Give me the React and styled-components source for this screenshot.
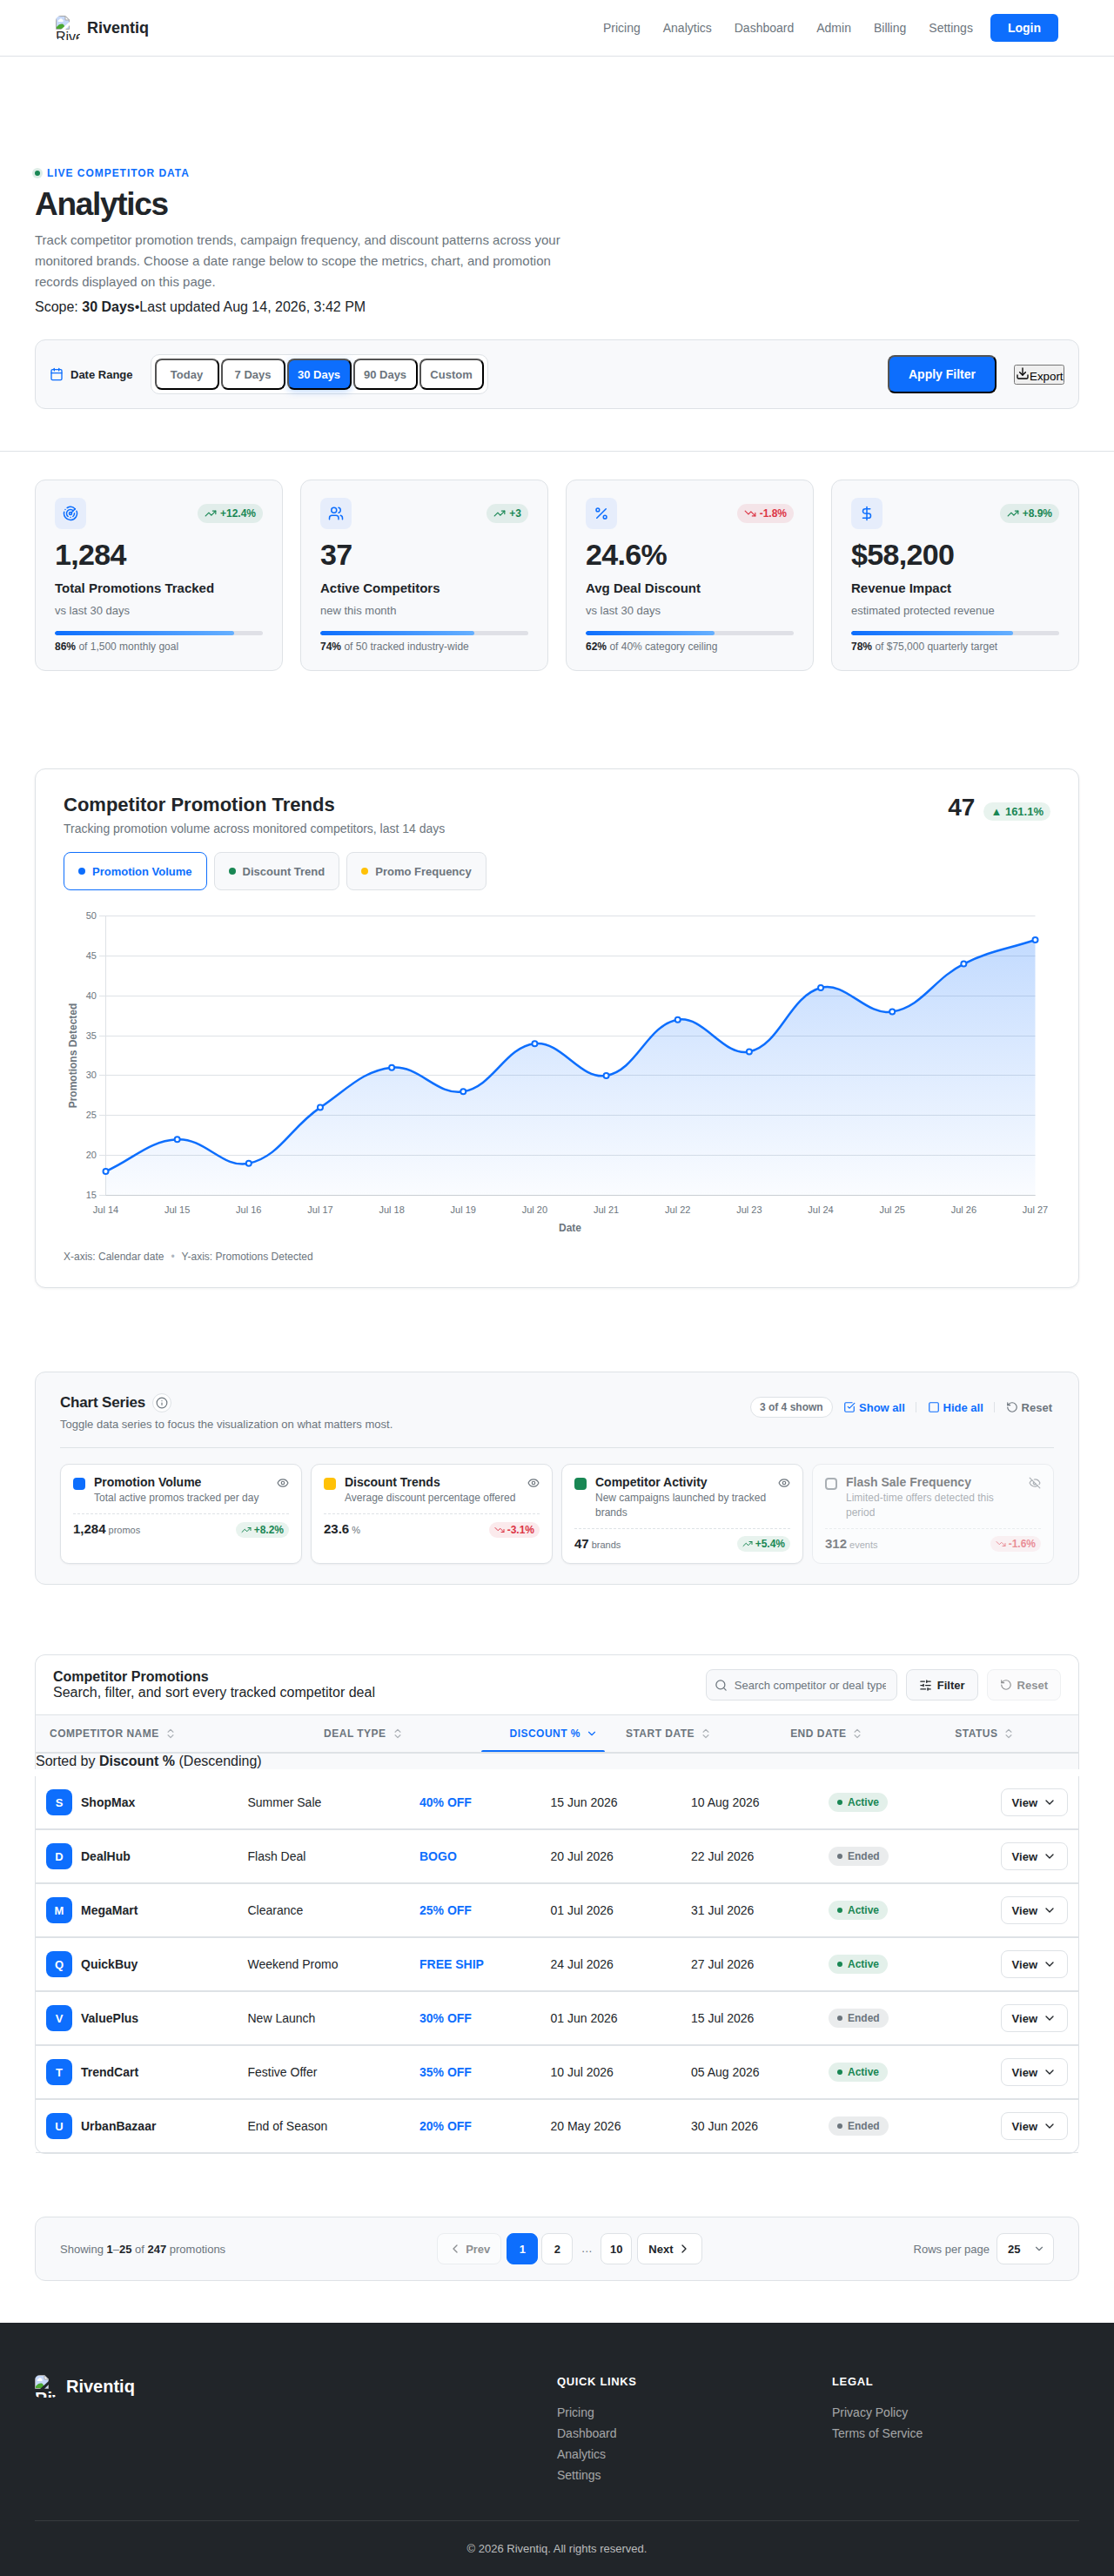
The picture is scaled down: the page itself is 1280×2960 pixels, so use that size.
import React from "react";
import styled, { createGlobalStyle, css } from "styled-components";
import {
  Calendar,
  ChevronDown,
  ChevronLeft,
  ChevronRight,
  ChevronsUpDown,
  DollarSign,
  Download,
  Eye,
  EyeOff,
  Info,
  Percent,
  Radar,
  RotateCcw,
  Search,
  SlidersHorizontal,
  Square,
  SquareCheckBig,
  TrendingDown,
  TrendingUp,
  Users,
} from "lucide-react";

const blue = "#0d6efd";
const green = "#198754";
const red = "#dc3545";
const yellow = "#ffc107";
const ink = "#212529";
const muted = "#6c757d";
const line = "#dee2e6";
const surface = "#f8f9fb";

const GlobalStyle = createGlobalStyle`
  *, *::before, *::after {
    box-sizing: border-box;
    margin: 0;
    padding: 0;
  }
  body {
    background: #fff;
    color: ${ink};
    font-family: "Liberation Sans", Arial, sans-serif;
    font-size: 16px;
  }
  svg {
    flex-shrink: 0;
  }
`;

/* ---------- header ---------- */

const Header = styled.header`
  display: flex;
  align-items: center;
  justify-content: space-between;
  height: 65px;
  padding: 0 64px;
  border-bottom: 1px solid ${line};
`;

const Brand = styled.div`
  display: flex;
  align-items: center;
  gap: ${(p) => (p.$footer ? 10 : 8)}px;
  font-size: ${(p) => (p.$footer ? 20 : 18)}px;
  font-weight: 700;
  color: ${(p) => (p.$footer ? "#fff" : ink)};
`;

const LogoBox = styled.span`
  display: block;
  width: ${(p) => (p.$footer ? 26 : 28)}px;
  height: ${(p) => (p.$footer ? 26 : 28)}px;
  border-radius: 6px;
  overflow: hidden;
  font-size: ${(p) => (p.$footer ? 20 : 16)}px;
  font-weight: ${(p) => (p.$footer ? 700 : 400)};
  line-height: ${(p) => (p.$footer ? 23 : 18)}px;

  svg {
    display: block;
  }
`;

const Nav = styled.nav`
  display: flex;
  align-items: center;
  gap: 26px;
  font-size: 14px;
  color: ${muted};
`;

const LoginButton = styled.a`
  display: flex;
  align-items: center;
  height: 32px;
  margin-left: -6px;
  padding: 0 20px;
  border-radius: 6px;
  background: ${blue};
  color: #fff;
  font-weight: 700;
`;

/* ---------- hero ---------- */

const Hero = styled.section`
  padding: 127px 40px 48px;
  border-bottom: 1px solid ${line};
`;

const Eyebrow = styled.div`
  display: flex;
  align-items: center;
  gap: 8px;
  height: 14px;
  font-size: 12px;
  font-weight: 700;
  letter-spacing: 0.08em;
  text-transform: uppercase;
  color: ${blue};

  &::before {
    content: "";
    width: 6px;
    height: 6px;
    border-radius: 50%;
    background: ${green};
    box-shadow: 0 0 0 3px rgba(25, 135, 84, 0.15);
  }
`;

const PageTitle = styled.h1`
  margin-top: 9px;
  font-size: 37px;
  line-height: 40px;
  letter-spacing: -0.035em;
`;

const Lead = styled.p`
  max-width: 620px;
  margin-top: 9px;
  font-size: 15px;
  line-height: 24px;
  color: ${muted};
`;

const Scope = styled.div`
  margin-top: 8px;
  line-height: 18px;
`;

const FilterBar = styled.div`
  display: flex;
  align-items: center;
  gap: 20px;
  margin-top: 28px;
  padding: 16px;
  border: 1px solid ${line};
  border-radius: 12px;
  background: ${surface};
`;

const FilterLabel = styled.div`
  display: flex;
  align-items: center;
  gap: 8px;
  font-size: 13px;
  font-weight: 700;

  svg {
    color: ${blue};
  }
`;

const Segments = styled.div`
  display: flex;
  gap: 2px;
  padding: 4px;
  border: 1px solid ${line};
  border-radius: 10px;
  background: #fff;
`;

const Segment = styled.button`
  width: 74px;
  height: 36px;
  border-radius: 8px;
  background: ${(p) => (p.$active ? blue : "#fff")};
  color: ${(p) => (p.$active ? "#fff" : muted)};
  font: 700 13px "Liberation Sans", Arial, sans-serif;
  ${(p) => p.$active && "box-shadow: 0 2px 8px rgba(13, 110, 253, 0.25);"}
`;

const ApplyButton = styled.button`
  height: 44px;
  margin-left: auto;
  padding: 0 22px;
  border-radius: 8px;
  background: ${blue};
  color: #fff;
  font: 700 14px "Liberation Sans", Arial, sans-serif;
`;

const ExportButton = styled.button`
  width: 58px;
  font-family: "Liberation Sans", Arial, sans-serif;
  white-space: nowrap;
`;

/* ---------- metric cards ---------- */

const Metrics = styled.section`
  display: grid;
  grid-template-columns: repeat(4, 1fr);
  gap: 20px;
  padding: 32px 40px 0;
`;

const MetricCard = styled.article`
  height: 220px;
  padding: 20px 22px;
  border: 1px solid ${line};
  border-radius: 12px;
  background: ${surface};
`;

const MetricTop = styled.div`
  display: flex;
  align-items: center;
  justify-content: space-between;
`;

const IconTile = styled.span`
  display: flex;
  align-items: center;
  justify-content: center;
  width: 36px;
  height: 36px;
  border-radius: 8px;
  background: #e6edfb;
  color: ${blue};
`;

const Trend = styled.span`
  display: flex;
  align-items: center;
  gap: ${(p) => (p.$small ? 3 : 4)}px;
  padding: ${(p) => (p.$small ? "2px 6px" : "4px 8px")};
  border-radius: 999px;
  font-size: 12px;
  font-weight: 700;
  line-height: 14px;
  color: ${(p) => (p.$down ? red : green)};
  background: ${(p) =>
    p.$down ? "rgba(220, 53, 69, 0.1)" : "rgba(25, 135, 84, 0.1)"};
`;

const MetricValue = styled.div`
  margin-top: 10px;
  font-size: 34px;
  font-weight: 700;
  line-height: 39px;
  letter-spacing: -0.02em;
`;

const MetricName = styled.div`
  margin-top: 9px;
  font-size: 15px;
  font-weight: 700;
  line-height: 20px;
`;

const MetricNote = styled.div`
  margin-top: 8px;
  font-size: 13px;
  line-height: 16px;
  color: ${muted};
`;

const Track = styled.div`
  height: 5px;
  margin-top: 15px;
  border-radius: 999px;
  background: #dfe0e6;
  overflow: hidden;
`;

const Fill = styled.div`
  height: 100%;
  border-radius: 999px;
  background: linear-gradient(90deg, ${blue}, #66b0ff);
`;

const MetricGoal = styled.div`
  margin-top: 6px;
  font-size: 12px;
  line-height: 14px;
  color: ${muted};

  strong {
    color: ${ink};
  }
`;

/* ---------- trend chart ---------- */

const ChartCard = styled.section`
  height: 597px;
  margin: 112px 40px 0;
  padding: 28px 32px;
  border: 1px solid ${line};
  border-radius: 12px;
  background: #fff;
  box-shadow: 0 1px 3px rgba(0, 0, 0, 0.06);
`;

const ChartHead = styled.div`
  display: flex;
  justify-content: space-between;
  height: 47px;
`;

const ChartTitle = styled.h2`
  font-size: 22px;
  line-height: 25px;
`;

const ChartSub = styled.p`
  margin-top: 7px;
  font-size: 14px;
  line-height: 16px;
  color: ${muted};
`;

const ChartStat = styled.div`
  display: flex;
  align-items: baseline;
  gap: 10px;
  height: 32px;
  font-size: 28px;
  font-weight: 700;
  line-height: 32px;
`;

const ChartDelta = styled.span`
  padding: 3px 8px;
  border-radius: 999px;
  background: rgba(25, 135, 84, 0.1);
  color: ${green};
  font-size: 13px;
  line-height: 15px;
`;

const Tabs = styled.div`
  display: flex;
  gap: 8px;
  margin-top: 20px;
`;

const Tab = styled.button`
  display: flex;
  align-items: center;
  gap: 8px;
  height: 44px;
  padding: 0 16px;
  border: 1px solid ${(p) => (p.$active ? blue : line)};
  border-radius: 8px;
  background: ${(p) => (p.$active ? "#fff" : surface)};
  color: ${(p) => (p.$active ? blue : muted)};
  font: 700 13px "Liberation Sans", Arial, sans-serif;

  &::before {
    content: "";
    width: 8px;
    height: 8px;
    border-radius: 50%;
    background: ${(p) => p.$dot};
  }
`;

const Plot = styled.svg`
  display: block;
  margin-top: 20px;
  font-family: "Liberation Sans", Arial, sans-serif;
`;

const ChartNote = styled.div`
  display: flex;
  gap: 8px;
  margin-top: 14px;
  font-size: 12px;
  line-height: 14px;
  color: ${muted};
`;

const Bullet = styled.span`
  color: #adb5bd;
`;

/* ---------- series panel ---------- */

const SeriesPanel = styled.section`
  height: 245px;
  margin: 96px 40px 0;
  padding: 24px 28px;
  border: 1px solid ${line};
  border-radius: 12px;
  background: ${surface};
`;

const SeriesHead = styled.div`
  display: flex;
  justify-content: space-between;
  height: 63px;
  border-bottom: 1px solid ${line};
`;

const SeriesTitle = styled.h3`
  display: flex;
  align-items: center;
  gap: 8px;
  height: 22px;
  font-size: 17px;
  letter-spacing: -0.01em;
`;

const InfoButton = styled.span`
  display: flex;
  align-items: center;
  justify-content: center;
  width: 22px;
  height: 22px;
  border: 1px solid ${line};
  border-radius: 50%;
  background: #fff;
  color: ${muted};
`;

const SeriesSub = styled.p`
  margin-top: 6px;
  font-size: 13px;
  line-height: 15px;
  color: ${muted};
`;

const SeriesActions = styled.div`
  display: flex;
  align-items: center;
  gap: 10.4px;
  height: 32px;
`;

const CountPill = styled.span`
  height: 24px;
  padding: 0 10px;
  border: 1px solid ${line};
  border-radius: 999px;
  background: #fff;
  color: ${muted};
  font-size: 12px;
  font-weight: 700;
  line-height: 22px;
`;

const TextButton = styled.span`
  display: flex;
  align-items: center;
  gap: 4px;
  padding: 0 2px;
  color: ${(p) => (p.$muted ? muted : blue)};
  font-size: 13px;
  font-weight: 700;
`;

const Divider = styled.span`
  width: 1px;
  height: 12px;
  background: ${line};
`;

const SeriesGrid = styled.div`
  display: grid;
  grid-template-columns: repeat(4, 1fr);
  gap: 10px;
  height: 114px;
  margin-top: 18px;
`;

const SeriesCard = styled.article`
  padding: 12px 14px;
  border: 1px solid ${line};
  border-radius: 10px;
  background: #fff;
  box-shadow: 0 1px 2px rgba(0, 0, 0, 0.05);
  ${(p) => p.$off && "opacity: 0.55; box-shadow: none;"}
`;

const SeriesTop = styled.div`
  display: flex;
  align-items: flex-start;
  gap: 10px;
  padding-bottom: 9.4px;
  border-bottom: 1px dashed ${line};

  > svg {
    margin-top: 2px;
    color: ${muted};
  }
`;

const Swatch = styled.span`
  flex-shrink: 0;
  width: 14px;
  height: 14px;
  margin-top: 3px;
  border: 2px solid ${(p) => p.$color || muted};
  border-radius: 4px;
  background: ${(p) => p.$color || "transparent"};
`;

const SeriesText = styled.div`
  flex: 1;
`;

const SeriesName = styled.div`
  font-size: 14px;
  font-weight: 700;
  line-height: 17px;
`;

const SeriesDesc = styled.div`
  margin-top: 1px;
  font-size: 12px;
  line-height: 1.4;
  color: ${muted};
`;

const SeriesFoot = styled.div`
  display: flex;
  align-items: center;
  justify-content: space-between;
  padding-top: 8px;
`;

const SeriesValue = styled.span`
  font-size: 15px;
  font-weight: 700;
  line-height: 18px;

  small {
    margin-left: 3px;
    color: ${muted};
    font-size: 11px;
    font-weight: 400;
  }
`;

/* ---------- promotions table ---------- */

const TablePanel = styled.section`
  margin: 80px 40px 0;
  border: 1px solid ${line};
  border-bottom: none;
  border-radius: 12px 12px 0 0;
`;

const Toolbar = styled.div`
  display: flex;
  align-items: center;
  gap: 10px;
  height: 69px;
  padding: 0 20px;
  border-bottom: 1px solid ${line};
`;

const ToolbarText = styled.div`
  flex: 1;
  line-height: 18px;
`;

const SearchBox = styled.div`
  position: relative;
  width: 220px;
  height: 36px;

  svg {
    position: absolute;
    top: 10.5px;
    left: 10px;
    color: ${muted};
  }
`;

const SearchInput = styled.input`
  width: 100%;
  height: 36px;
  padding: 0 12px 0 32px;
  border: 1px solid ${line};
  border-radius: 8px;
  background: ${surface};
  font: 13px "Liberation Sans", Arial, sans-serif;

  &::placeholder {
    color: ${muted};
  }
`;

const ToolButton = styled.span`
  display: flex;
  align-items: center;
  gap: 6px;
  height: 36px;
  padding: 0 14px;
  border: 1px solid ${line};
  border-radius: 8px;
  background: ${surface};
  font-size: 13px;
  font-weight: 700;
  ${(p) => p.$disabled && "opacity: 0.5;"}
`;

const SortRow = styled.div`
  display: grid;
  grid-template-columns: 1.9fr 1.1fr 0.9fr 1.1fr 1.1fr 0.9fr;
  gap: 16px;
  height: 44px;
  padding: 0 8px;
  border-bottom: 2px solid ${line};
  background: ${surface};
`;

const SortCell = styled.div`
  display: flex;
  align-items: center;
  gap: 6px;
  padding: 0 8px;
  font-size: 12px;
  font-weight: 700;
  letter-spacing: 0.04em;
  text-transform: uppercase;
  white-space: nowrap;
  color: ${muted};

  svg {
    opacity: 0.55;
  }

  ${(p) =>
    p.$active &&
    css`
      position: relative;
      justify-content: flex-end;
      color: ${blue};

      svg {
        opacity: 1;
      }

      &::after {
        content: "";
        position: absolute;
        right: 0;
        bottom: 0;
        left: 0;
        height: 2px;
        border-radius: 2px 2px 0 0;
        background: ${blue};
      }
    `}
`;

const SortNote = styled.div`
  height: 18px;
  line-height: 18px;
  background: ${surface};
`;

const TableBody = styled.section`
  margin: 8px 40px 0;
  border: 1px solid ${line};
  border-top: none;
  border-radius: 0 0 12px 12px;
`;

const Row = styled.div`
  display: grid;
  grid-template-columns: 231.5px 197.5px 150.5px 161.5px 158px 1fr auto;
  align-items: center;
  height: 62px;
  border-bottom: 2px solid ${line};
  font-size: 14px;

  &:last-child {
    height: 61px;
    border-bottom-width: 1px;
  }
`;

const Cell = styled.div`
  display: flex;
  align-items: center;
  gap: 10px;
  padding: 0 12px;
  font-weight: ${(p) => (p.$bold ? 700 : 400)};
  color: ${(p) => (p.$blue ? blue : ink)};
`;

const Avatar = styled.span`
  display: flex;
  align-items: center;
  justify-content: center;
  width: 30px;
  height: 30px;
  border-radius: 8px;
  background: ${blue};
  color: #fff;
  font-size: 13px;
`;

const Status = styled.span`
  display: flex;
  align-items: center;
  gap: 6px;
  padding: 4px 10px;
  border-radius: 999px;
  font-size: 12px;
  font-weight: 700;
  line-height: 14px;
  color: ${(p) => (p.$active ? green : muted)};
  background: ${(p) =>
    p.$active ? "rgba(25, 135, 84, 0.12)" : "rgba(108, 117, 125, 0.14)"};

  &::before {
    content: "";
    width: 6px;
    height: 6px;
    border-radius: 50%;
    background: currentColor;
  }
`;

const ViewButton = styled.span`
  display: flex;
  align-items: center;
  gap: 6px;
  height: 32px;
  padding: 0 12px;
  border: 1px solid ${line};
  border-radius: 8px;
  font-size: 13px;
  font-weight: 700;
`;

/* ---------- pagination ---------- */

const PagerBar = styled.section`
  display: flex;
  align-items: center;
  justify-content: space-between;
  height: 74px;
  margin: 72px 40px 0;
  padding: 0 28px;
  border: 1px solid ${line};
  border-radius: 12px;
  background: ${surface};
  font-size: 13px;
  color: ${muted};

  strong {
    color: ${ink};
  }
`;

const Pager = styled.div`
  display: flex;
  align-items: center;
  gap: 6px;
`;

const Pages = styled.div`
  display: flex;
  gap: 4px;
`;

const PageButton = styled.span`
  display: flex;
  align-items: center;
  justify-content: center;
  gap: 4px;
  min-width: 36px;
  height: 36px;
  padding: 0 ${(p) => (p.$wide ? 12 : 0)}px;
  border: 1px solid ${(p) => (p.$active ? blue : line)};
  border-radius: 8px;
  background: ${(p) => (p.$active ? blue : "#fff")};
  color: ${(p) => (p.$active ? "#fff" : ink)};
  font-weight: 700;
  ${(p) => p.$disabled && "opacity: 0.5;"}
`;

const Ellipsis = styled.span`
  width: 24px;
  line-height: 36px;
  text-align: center;
`;

const PageSize = styled.div`
  display: flex;
  align-items: center;
  gap: 8px;
`;

const PageSelect = styled.span`
  display: flex;
  align-items: center;
  justify-content: space-between;
  width: 66px;
  height: 36px;
  padding: 0 9px 0 12px;
  border: 1px solid ${line};
  border-radius: 8px;
  background: #fff;
`;

/* ---------- footer ---------- */

const Footer = styled.footer`
  height: 291px;
  margin-top: 48px;
  padding: 60px 40px 0;
  background: ${ink};
`;

const FooterGrid = styled.div`
  display: grid;
  grid-template-columns: 2fr 1fr 1fr;
  gap: 32px;
  align-items: start;
  height: 168px;
  border-bottom: 1px solid rgba(255, 255, 255, 0.1);
`;

const FooterColumn = styled.div`
  display: flex;
  flex-direction: column;
  gap: 8px;
  font-size: 14px;
  line-height: 16px;
  color: rgba(255, 255, 255, 0.6);
`;

const FooterHeading = styled.h4`
  margin-bottom: 12px;
  font-size: 13px;
  line-height: 15px;
  letter-spacing: 0.05em;
  text-transform: uppercase;
  color: #fff;
`;

const Copyright = styled.p`
  padding-top: 24px;
  font-size: 13px;
  line-height: 15px;
  text-align: center;
  color: rgba(255, 255, 255, 0.7);
`;

/* ---------- data ---------- */

const links = ["Pricing", "Analytics", "Dashboard", "Admin", "Billing", "Settings"];
const ranges = ["Today", "7 Days", "30 Days", "90 Days", "Custom"];

const metrics = [
  { icon: Radar, trend: "+12.4%", value: "1,284", name: "Total Promotions Tracked", note: "vs last 30 days", percent: 86, goal: "of 1,500 monthly goal" },
  { icon: Users, trend: "+3", value: "37", name: "Active Competitors", note: "new this month", percent: 74, goal: "of 50 tracked industry-wide" },
  { icon: Percent, trend: "-1.8%", value: "24.6%", name: "Avg Deal Discount", note: "vs last 30 days", percent: 62, goal: "of 40% category ceiling" },
  { icon: DollarSign, trend: "+8.9%", value: "$58,200", name: "Revenue Impact", note: "estimated protected revenue", percent: 78, goal: "of $75,000 quarterly target" },
];

const volume = [18, 22, 19, 26, 31, 28, 34, 30, 37, 33, 41, 38, 44, 47];

const series = [
  { color: blue, name: "Promotion Volume", desc: "Total active promos tracked per day", value: "1,284", unit: "promos", trend: "+8.2%" },
  { color: yellow, name: "Discount Trends", desc: "Average discount percentage offered", value: "23.6", unit: "%", trend: "-3.1%" },
  { color: green, name: "Competitor Activity", desc: "New campaigns launched by tracked brands", value: "47", unit: "brands", trend: "+5.4%" },
  { off: true, name: "Flash Sale Frequency", desc: "Limited-time offers detected this period", value: "312", unit: "events", trend: "-1.6%" },
];

const columns = ["Competitor Name", "Deal Type", "Discount %", "Start Date", "End Date", "Status"];

const promotions = [
  ["ShopMax", "Summer Sale", "40% OFF", "15 Jun 2026", "10 Aug 2026", "Active"],
  ["DealHub", "Flash Deal", "BOGO", "20 Jul 2026", "22 Jul 2026", "Ended"],
  ["MegaMart", "Clearance", "25% OFF", "01 Jul 2026", "31 Jul 2026", "Active"],
  ["QuickBuy", "Weekend Promo", "FREE SHIP", "24 Jul 2026", "27 Jul 2026", "Active"],
  ["ValuePlus", "New Launch", "30% OFF", "01 Jun 2026", "15 Jul 2026", "Ended"],
  ["TrendCart", "Festive Offer", "35% OFF", "10 Jul 2026", "05 Aug 2026", "Active"],
  ["UrbanBazaar", "End of Season", "20% OFF", "20 May 2026", "30 Jun 2026", "Ended"],
];

/* ---------- components ---------- */

const Logo = ({ footer }) => (
  <Brand $footer={footer}>
    <LogoBox $footer={footer}>
      <svg width="16" height="16" viewBox="0 0 16 16">
        <path d="M0.5 0.5H11L15.5 5V15.5H0.5Z" fill="#c6d8f8" stroke="#a8a8a8" />
        <path d="M3 7a1.5 1.5 0 0 1 1.2-2.4A2 2 0 0 1 8 4.8 1.2 1.2 0 0 1 8.2 7Z" fill="#fff" />
        <path d="M1 15V13C3 10.5 5 9.5 7 9.5S10 11 11 15Z" fill="#4aa832" />
        <path d="M6 16L16 7V11L11 16Z" fill={footer ? ink : "#fff"} />
        <path d="M11 0.5V5H15.5Z" fill="#fff" stroke="#a8a8a8" />
      </svg>
      Riventiq
    </LogoBox>
    Riventiq
  </Brand>
);

const TrendPill = ({ value, small }) => {
  const down = value.startsWith("-");
  const Icon = down ? TrendingDown : TrendingUp;

  return (
    <Trend $down={down} $small={small}>
      <Icon size={small ? 12 : 14} />
      {value}
    </Trend>
  );
};

// plot area inside the 1134x380 drawing
const area = { left: 48.5, right: 1116.5, top: 9.5, bottom: 330.5 };
const toX = (i) => area.left + ((area.right - area.left) * i) / (volume.length - 1);
const toY = (v) => area.bottom - ((area.bottom - area.top) * (v - 15)) / 35;
const clampY = (y) => Math.min(area.bottom, Math.max(area.top, y));

const smoothPath = () => {
  const tension = 0.4;
  const pts = volume.map((v, i) => ({ x: toX(i), y: toY(v) }));
  const handles = pts.map((cur, i) => {
    const prev = pts[i - 1] || cur;
    const next = pts[i + 1] || cur;
    const a = Math.hypot(cur.x - prev.x, cur.y - prev.y);
    const b = Math.hypot(next.x - cur.x, next.y - cur.y);
    const fa = (tension * a) / (a + b);
    const fb = (tension * b) / (a + b);
    return {
      inX: cur.x - fa * (next.x - prev.x),
      inY: clampY(cur.y - fa * (next.y - prev.y)),
      outX: cur.x + fb * (next.x - prev.x),
      outY: clampY(cur.y + fb * (next.y - prev.y)),
    };
  });

  return pts
    .map((p, i) => {
      if (i === 0) return `M${p.x} ${p.y}`;
      const from = handles[i - 1];
      const to = handles[i];
      return `C${from.outX} ${from.outY} ${to.inX} ${to.inY} ${p.x} ${p.y}`;
    })
    .join(" ");
};

const TrendChart = () => {
  const path = smoothPath();

  return (
    <Plot width="1134" height="380" viewBox="0 0 1134 380">
      <defs>
        <linearGradient id="volumeFill" x1="0" x2="0" y1={area.top} y2={area.bottom} gradientUnits="userSpaceOnUse">
          <stop offset="0" stopColor={blue} stopOpacity="0.27" />
          <stop offset="1" stopColor={blue} stopOpacity="0.02" />
        </linearGradient>
      </defs>
      {[50, 45, 40, 35, 30, 25, 20, 15].map((tick) => {
        const y = Math.floor(toY(tick)) + 0.5;
        return (
          <g key={tick}>
            <line x1="41" x2={area.right} y1={y} y2={y} stroke={line} />
            <text x="38" y={toY(tick) + 3.5} fontSize="11" textAnchor="end" fill={muted}>
              {tick}
            </text>
          </g>
        );
      })}
      <line x1={area.left} x2={area.left} y1={area.top} y2={area.bottom} stroke={line} />
      <path d={`${path} L${area.right} ${area.bottom} L${area.left} ${area.bottom}Z`} fill="url(#volumeFill)" />
      <line x1={area.left} x2={area.right} y1={area.bottom} y2={area.bottom} stroke="#c9ced3" />
      <path d={path} fill="none" stroke={blue} strokeWidth="2.5" />
      {volume.map((v, i) => (
        <g key={i}>
          <circle cx={toX(i)} cy={toY(v)} r="3" fill="#fff" stroke={blue} strokeWidth="2" />
          <text x={toX(i)} y="351" fontSize="11" textAnchor="middle" fill={muted}>
            Jul {14 + i}
          </text>
        </g>
      ))}
      <text x="582" y="372" fontSize="12" fontWeight="700" textAnchor="middle" fill={muted}>
        Date
      </text>
      <text transform="translate(15 170) rotate(-90)" fontSize="12" fontWeight="700" textAnchor="middle" fill={muted}>
        Promotions Detected
      </text>
    </Plot>
  );
};

const App = () => {
  return (
    <>
      <GlobalStyle />

      <Header>
        <Logo />
        <Nav>
          {links.map((link) => (
            <a key={link}>{link}</a>
          ))}
          <LoginButton>Login</LoginButton>
        </Nav>
      </Header>

      <Hero>
        <Eyebrow>Live competitor data</Eyebrow>
        <PageTitle>Analytics</PageTitle>
        <Lead>
          Track competitor promotion trends, campaign frequency, and discount patterns across your
          monitored brands. Choose a date range below to scope the metrics, chart, and promotion
          records displayed on this page.
        </Lead>
        <Scope>
          Scope: <strong>30 Days</strong>•Last updated Aug 14, 2026, 3:42 PM
        </Scope>
        <FilterBar>
          <FilterLabel>
            <Calendar size={16} />
            Date Range
          </FilterLabel>
          <Segments>
            {ranges.map((range) => (
              <Segment key={range} $active={range === "30 Days"}>
                {range}
              </Segment>
            ))}
          </Segments>
          <ApplyButton>Apply Filter</ApplyButton>
          <ExportButton>
            <Download size={16} />
            Export
          </ExportButton>
        </FilterBar>
      </Hero>

      <Metrics>
        {metrics.map(({ icon: Icon, ...m }) => (
          <MetricCard key={m.name}>
            <MetricTop>
              <IconTile>
                <Icon size={18} />
              </IconTile>
              <TrendPill value={m.trend} />
            </MetricTop>
            <MetricValue>{m.value}</MetricValue>
            <MetricName>{m.name}</MetricName>
            <MetricNote>{m.note}</MetricNote>
            <Track>
              <Fill style={{ width: `${m.percent}%` }} />
            </Track>
            <MetricGoal>
              <strong>{m.percent}%</strong> {m.goal}
            </MetricGoal>
          </MetricCard>
        ))}
      </Metrics>

      <ChartCard>
        <ChartHead>
          <div>
            <ChartTitle>Competitor Promotion Trends</ChartTitle>
            <ChartSub>Tracking promotion volume across monitored competitors, last 14 days</ChartSub>
          </div>
          <ChartStat>
            47
            <ChartDelta>▲ 161.1%</ChartDelta>
          </ChartStat>
        </ChartHead>
        <Tabs>
          <Tab $active $dot={blue}>Promotion Volume</Tab>
          <Tab $dot={green}>Discount Trend</Tab>
          <Tab $dot={yellow}>Promo Frequency</Tab>
        </Tabs>
        <TrendChart />
        <ChartNote>
          <span>X-axis: Calendar date</span>
          <Bullet>•</Bullet>
          <span>Y-axis: Promotions Detected</span>
        </ChartNote>
      </ChartCard>

      <SeriesPanel>
        <SeriesHead>
          <div>
            <SeriesTitle>
              Chart Series
              <InfoButton>
                <Info size={14} />
              </InfoButton>
            </SeriesTitle>
            <SeriesSub>Toggle data series to focus the visualization on what matters most.</SeriesSub>
          </div>
          <SeriesActions>
            <CountPill>3 of 4 shown</CountPill>
            <TextButton>
              <SquareCheckBig size={14} />
              Show all
            </TextButton>
            <Divider />
            <TextButton>
              <Square size={14} />
              Hide all
            </TextButton>
            <Divider />
            <TextButton $muted>
              <RotateCcw size={14} />
              Reset
            </TextButton>
          </SeriesActions>
        </SeriesHead>
        <SeriesGrid>
          {series.map((s) => (
            <SeriesCard key={s.name} $off={s.off}>
              <SeriesTop>
                <Swatch $color={s.color} />
                <SeriesText>
                  <SeriesName>{s.name}</SeriesName>
                  <SeriesDesc>{s.desc}</SeriesDesc>
                </SeriesText>
                {s.off ? <EyeOff size={14} /> : <Eye size={14} />}
              </SeriesTop>
              <SeriesFoot>
                <SeriesValue>
                  {s.value}
                  <small>{s.unit}</small>
                </SeriesValue>
                <TrendPill small value={s.trend} />
              </SeriesFoot>
            </SeriesCard>
          ))}
        </SeriesGrid>
      </SeriesPanel>

      <TablePanel>
        <Toolbar>
          <ToolbarText>
            <strong>Competitor Promotions</strong>
            <div>Search, filter, and sort every tracked competitor deal</div>
          </ToolbarText>
          <SearchBox>
            <SearchInput placeholder="Search competitor or deal type..." />
            <Search size={15} />
          </SearchBox>
          <ToolButton>
            <SlidersHorizontal size={15} />
            Filter
          </ToolButton>
          <ToolButton $disabled>
            <RotateCcw size={14} />
            Reset
          </ToolButton>
        </Toolbar>
        <SortRow>
          {columns.map((column) => {
            const active = column === "Discount %";
            return (
              <SortCell key={column} $active={active}>
                {column}
                {active ? <ChevronDown size={14} /> : <ChevronsUpDown size={14} />}
              </SortCell>
            );
          })}
        </SortRow>
        <SortNote>
          Sorted by <strong>Discount %</strong> (Descending)
        </SortNote>
      </TablePanel>

      <TableBody>
        {promotions.map(([name, deal, discount, start, end, status]) => (
          <Row key={name}>
            <Cell $bold>
              <Avatar>{name[0]}</Avatar>
              {name}
            </Cell>
            <Cell>{deal}</Cell>
            <Cell $bold $blue>{discount}</Cell>
            <Cell>{start}</Cell>
            <Cell>{end}</Cell>
            <Cell>
              <Status $active={status === "Active"}>{status}</Status>
            </Cell>
            <Cell>
              <ViewButton>
                View
                <ChevronDown size={16} />
              </ViewButton>
            </Cell>
          </Row>
        ))}
      </TableBody>

      <PagerBar>
        <div>
          Showing <strong>1</strong>–<strong>25</strong> of <strong>247</strong> promotions
        </div>
        <Pager>
          <PageButton $wide $disabled>
            <ChevronLeft size={16} />
            Prev
          </PageButton>
          <Pages>
            <PageButton $active>1</PageButton>
            <PageButton>2</PageButton>
            <Ellipsis>…</Ellipsis>
            <PageButton>10</PageButton>
          </Pages>
          <PageButton $wide>
            Next
            <ChevronRight size={16} />
          </PageButton>
        </Pager>
        <PageSize>
          Rows per page
          <PageSelect>
            <strong>25</strong>
            <ChevronDown size={14} />
          </PageSelect>
        </PageSize>
      </PagerBar>

      <Footer>
        <FooterGrid>
          <Logo footer />
          <FooterColumn>
            <FooterHeading>Quick Links</FooterHeading>
            <a>Pricing</a>
            <a>Dashboard</a>
            <a>Analytics</a>
            <a>Settings</a>
          </FooterColumn>
          <FooterColumn>
            <FooterHeading>Legal</FooterHeading>
            <a>Privacy Policy</a>
            <a>Terms of Service</a>
          </FooterColumn>
        </FooterGrid>
        <Copyright>© 2026 Riventiq. All rights reserved.</Copyright>
      </Footer>
    </>
  );
};

export default App;
